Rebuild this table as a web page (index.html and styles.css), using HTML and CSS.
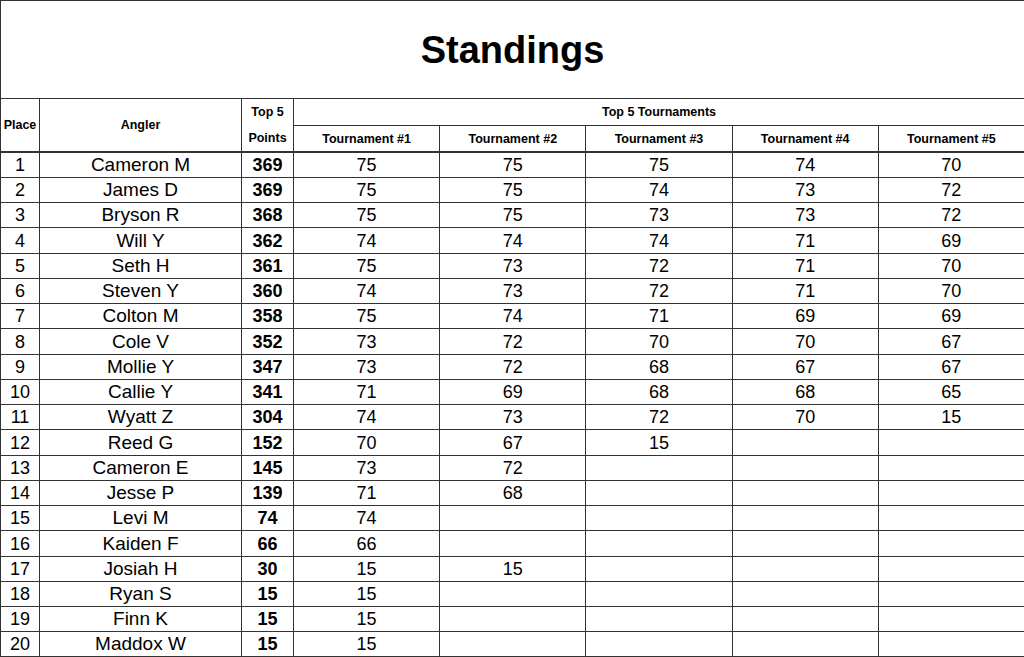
FILE: index.html
```html
<!DOCTYPE html>
<html>
<head>
<meta charset="utf-8">
<link rel="stylesheet" href="styles.css">
</head>
<body>
<table class="standings">
  <colgroup>
    <col class="c-place">
    <col class="c-angler">
    <col class="c-points">
    <col class="c-t"><col class="c-t"><col class="c-t"><col class="c-t"><col class="c-t">
  </colgroup>
  <thead>
    <tr class="title-row"><th colspan="8" class="title">Standings</th></tr>
    <tr class="head1">
      <th rowspan="2" class="h">Place</th>
      <th rowspan="2" class="h">Angler</th>
      <th rowspan="2" class="h pts-h"><span class="ln">Top 5</span><span class="ln">Points</span></th>
      <th colspan="5" class="h">Top 5 Tournaments</th>
    </tr>
    <tr class="head2">
      <th class="h">Tournament #1</th>
      <th class="h">Tournament #2</th>
      <th class="h">Tournament #3</th>
      <th class="h">Tournament #4</th>
      <th class="h">Tournament #5</th>
    </tr>
  </thead>
  <tbody>
    <tr><td>1</td><td class="name">Cameron M</td><td class="pts">369</td><td class="t">75</td><td class="t">75</td><td class="t">75</td><td class="t">74</td><td class="t">70</td></tr>
    <tr><td>2</td><td class="name">James D</td><td class="pts">369</td><td class="t">75</td><td class="t">75</td><td class="t">74</td><td class="t">73</td><td class="t">72</td></tr>
    <tr><td>3</td><td class="name">Bryson R</td><td class="pts">368</td><td class="t">75</td><td class="t">75</td><td class="t">73</td><td class="t">73</td><td class="t">72</td></tr>
    <tr class="tall"><td>4</td><td class="name">Will Y</td><td class="pts">362</td><td class="t">74</td><td class="t">74</td><td class="t">74</td><td class="t">71</td><td class="t">69</td></tr>
    <tr><td>5</td><td class="name">Seth H</td><td class="pts">361</td><td class="t">75</td><td class="t">73</td><td class="t">72</td><td class="t">71</td><td class="t">70</td></tr>
    <tr><td>6</td><td class="name">Steven Y</td><td class="pts">360</td><td class="t">74</td><td class="t">73</td><td class="t">72</td><td class="t">71</td><td class="t">70</td></tr>
    <tr><td>7</td><td class="name">Colton M</td><td class="pts">358</td><td class="t">75</td><td class="t">74</td><td class="t">71</td><td class="t">69</td><td class="t">69</td></tr>
    <tr class="tall"><td>8</td><td class="name">Cole V</td><td class="pts">352</td><td class="t">73</td><td class="t">72</td><td class="t">70</td><td class="t">70</td><td class="t">67</td></tr>
    <tr><td>9</td><td class="name">Mollie Y</td><td class="pts">347</td><td class="t">73</td><td class="t">72</td><td class="t">68</td><td class="t">67</td><td class="t">67</td></tr>
    <tr><td>10</td><td class="name">Callie Y</td><td class="pts">341</td><td class="t">71</td><td class="t">69</td><td class="t">68</td><td class="t">68</td><td class="t">65</td></tr>
    <tr><td>11</td><td class="name">Wyatt Z</td><td class="pts">304</td><td class="t">74</td><td class="t">73</td><td class="t">72</td><td class="t">70</td><td class="t">15</td></tr>
    <tr class="tall"><td>12</td><td class="name">Reed G</td><td class="pts">152</td><td class="t">70</td><td class="t">67</td><td class="t">15</td><td class="t"></td><td class="t"></td></tr>
    <tr><td>13</td><td class="name">Cameron E</td><td class="pts">145</td><td class="t">73</td><td class="t">72</td><td class="t"></td><td class="t"></td><td class="t"></td></tr>
    <tr><td>14</td><td class="name">Jesse P</td><td class="pts">139</td><td class="t">71</td><td class="t">68</td><td class="t"></td><td class="t"></td><td class="t"></td></tr>
    <tr><td>15</td><td class="name">Levi M</td><td class="pts">74</td><td class="t">74</td><td class="t"></td><td class="t"></td><td class="t"></td><td class="t"></td></tr>
    <tr class="tall"><td>16</td><td class="name">Kaiden F</td><td class="pts">66</td><td class="t">66</td><td class="t"></td><td class="t"></td><td class="t"></td><td class="t"></td></tr>
    <tr><td>17</td><td class="name">Josiah H</td><td class="pts">30</td><td class="t">15</td><td class="t">15</td><td class="t"></td><td class="t"></td><td class="t"></td></tr>
    <tr><td>18</td><td class="name">Ryan S</td><td class="pts">15</td><td class="t">15</td><td class="t"></td><td class="t"></td><td class="t"></td><td class="t"></td></tr>
    <tr><td>19</td><td class="name">Finn K</td><td class="pts">15</td><td class="t">15</td><td class="t"></td><td class="t"></td><td class="t"></td><td class="t"></td></tr>
    <tr><td>20</td><td class="name">Maddox W</td><td class="pts">15</td><td class="t">15</td><td class="t"></td><td class="t"></td><td class="t"></td><td class="t"></td></tr>
  </tbody>
</table>
</body>
</html>
```

FILE: styles.css
```css
html, body {
  margin: 0;
  padding: 0;
  background: #fff;
}
body {
  font-family: "Liberation Sans", Arial, sans-serif;
  color: #000;
  width: 1024px;
  height: 657px;
  overflow: hidden;
}
.standings {
  width: 1024px;
  table-layout: fixed;
  border-collapse: collapse;
  border: 1px solid #333;
}
.c-place { width: 39px; }
.c-angler { width: 202px; }
.c-points { width: 52px; }
.c-t { width: 146.2px; }

.standings th,
.standings td {
  border: 1px solid #333;
  padding: 0;
  text-align: center;
  vertical-align: middle;
  white-space: nowrap;
  overflow: hidden;
}
.title-row th {
  height: 95px;
  font-size: 38px;
  font-weight: bold;
  padding-top: 2px;
}
.h {
  font-size: 12.5px;
  font-weight: bold;
}
.head1 .h { height: 26px; }
.head2 .h { height: 25px; }
.head2 .h, .head1 .h { border-bottom-width: 2px; }
.head1 th[colspan] { border-bottom-width: 1px; }
.pts-h .ln {
  display: block;
  line-height: 26px;
}
.standings td {
  height: 24px;
  font-size: 18px;
  line-height: 20px;
}
.standings tr.tall td {
  height: 25px;
}
.standings td.name {
  font-size: 19px;
}
.standings td.pts {
  font-weight: bold;
}
.standings td.t + td.t {
  border-left-color: #888;
}
.standings tbody tr:last-child td {
  border-bottom-width: 2px;
}
```
